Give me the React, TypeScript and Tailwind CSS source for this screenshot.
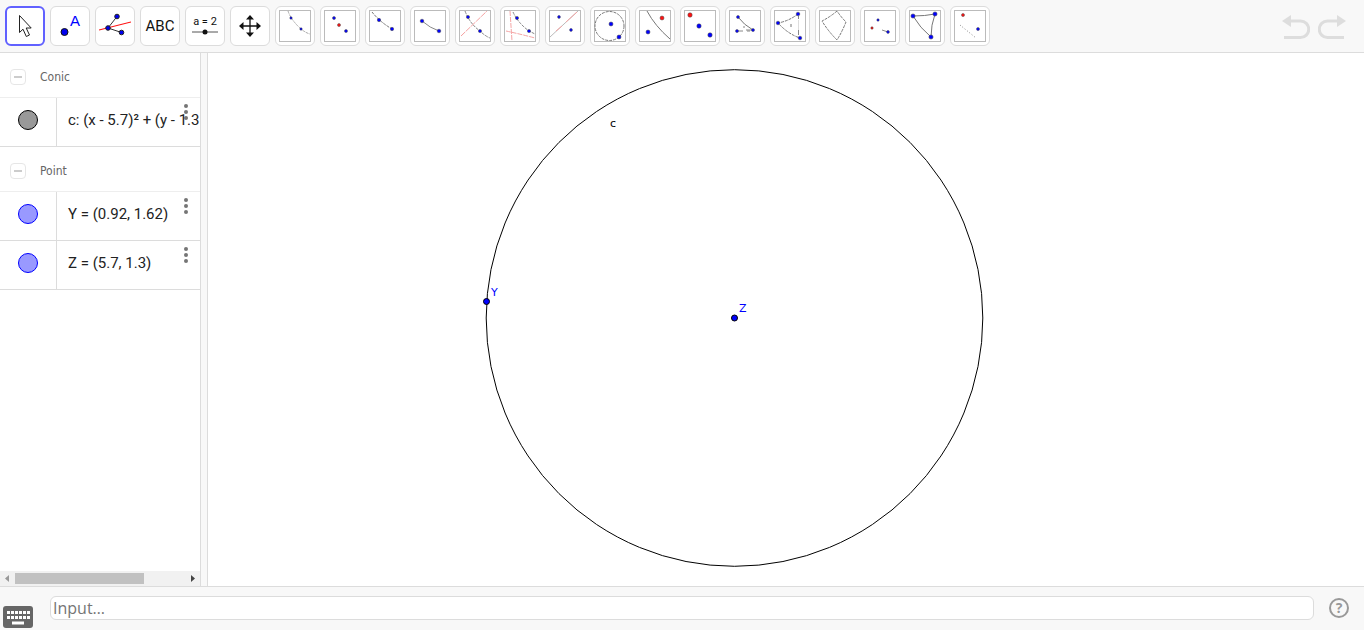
import { useState } from "react";
import type { ReactNode } from "react";

type DotProps = { x: number; y: number; r?: number; color?: string };

function Dot({ x, y, r = 2, color = "#0000ff" }: DotProps) {
  return <circle cx={x} cy={y} r={r} fill={color} stroke="#444" strokeWidth="0.5" />;
}

const RED = "#ff1111";

type Tool = { name: string; custom?: boolean; icon: ReactNode };

const tools: Tool[] = [
  {
    name: "Move",
    icon: (
      <path d="M10.5 5.5V22.5L14 19.2L17.3 26.5L20.5 25L17.2 18H22.2Z" fill="#fff" stroke="#222" strokeWidth="1" />
    )
  },
  {
    name: "Point",
    icon: (
      <>
        <circle cx="10.5" cy="22" r="3.5" fill="#0000ee" stroke="#111" />
        <text className="font-['Liberation_Sans',sans-serif]" x="16" y="16" fill="#0000ff" fontSize="15">
          A
        </text>
      </>
    )
  },
  {
    name: "Best Fit Line",
    icon: (
      <>
        <path d="M18 6.5L9 18L22.5 22.5" fill="none" stroke="#333" />
        <path d="M0 20L32 12" stroke="#ff1010" strokeWidth="1.2" />
        <circle cx="18" cy="6.5" r="2.3" fill="#0000ee" stroke="#222" />
        <circle cx="9" cy="18" r="2.3" fill="#0000ee" stroke="#222" />
        <circle cx="22.5" cy="22.5" r="2.3" fill="#0000ee" stroke="#222" />
      </>
    )
  },
  {
    name: "Text",
    icon: (
      <text x="16" y="21" textAnchor="middle" fontSize="15" fill="#111">
        ABC
      </text>
    )
  },
  {
    name: "Slider",
    icon: (
      <>
        <text x="16" y="15" textAnchor="middle" fontSize="11" fill="#111">
          a = 2
        </text>
        <path d="M3 22H29" stroke="#555" />
        <circle cx="16" cy="22" r="2.5" fill="#111" />
      </>
    )
  },
  {
    name: "Move Graphics View",
    icon: (
      <>
        <path d="M16 8V24M8 16H24" stroke="#111" strokeWidth="1.3" />
        <path d="M16 5L20 9.5H12ZM16 27L20 22.500H12ZM5 16L9.5 12V20ZM27 16L22.500 12V20Z" fill="#111" />
      </>
    )
  },
  {
    name: "Tool 1",
    custom: true,
    icon: (
      <>
        <path d="M9 1Q12 10 22 19Q27 23 31 24" fill="none" stroke="#aaa" strokeDasharray="3 1" />
        <Dot x={12} y={8} r={1.2} />
        <Dot x={22} y={19} r={1.2} />
      </>
    )
  },
  {
    name: "Tool 2",
    custom: true,
    icon: (
      <>
        <Dot x={10} y={8} r={1.5} />
        <Dot x={15} y={15} r={1.5} color={RED} />
        <Dot x={22} y={21} r={1.5} />
      </>
    )
  },
  {
    name: "Tool 3",
    custom: true,
    icon: (
      <>
        <path d="M3 2Q11 12 23 19" fill="none" stroke="#777" strokeDasharray="3 1" />
        <Dot x={10} y={10} r={1.7} />
        <Dot x={23} y={19} r={1.7} />
      </>
    )
  },
  {
    name: "Tool 4",
    custom: true,
    icon: (
      <>
        <path d="M8 11Q16 18 25 21" fill="none" stroke="#888" />
        <Dot x={8} y={11} r={1.8} />
        <Dot x={25} y={21} r={1.8} />
      </>
    )
  },
  {
    name: "Tool 5",
    custom: true,
    icon: (
      <>
        <path d="M2 26L28 1" stroke="#f5a0a0" strokeDasharray="6 1" />
        <path d="M6 1Q11 14 21 21Q26 26 31 28" fill="none" stroke="#888" strokeDasharray="3 1" />
        <Dot x={9} y={7} r={1.6} />
        <Dot x={21} y={21} r={1.6} />
      </>
    )
  },
  {
    name: "Tool 6",
    custom: true,
    icon: (
      <>
        <path d="M6 1L8 31M2 21Q16 24 31 28" fill="none" stroke="#f5a5a5" strokeDasharray="5 1" />
        <path d="M9 2Q14 13 25 21L31 24" fill="none" stroke="#888" strokeDasharray="3 1" />
        <Dot x={13} y={8} r={1.6} />
        <Dot x={25} y={21} r={1.6} />
      </>
    )
  },
  {
    name: "Tool 7",
    custom: true,
    icon: (
      <>
        <path d="M1 27L29 1" stroke="#bbb" />
        <path d="M7 21L13 16M17 12L28 2" stroke="#f5a5a5" />
        <Dot x={10} y={7} r={1.4} />
        <Dot x={22} y={20} r={1.4} />
      </>
    )
  },
  {
    name: "Tool 8",
    custom: true,
    icon: (
      <>
        <circle cx="15.5" cy="16" r="14.5" fill="none" stroke="#777" strokeDasharray="3 1" />
        <Dot x={17} y={14} r={2} />
        <Dot x={25} y={27} r={2} />
      </>
    )
  },
  {
    name: "Tool 9",
    custom: true,
    icon: (
      <>
        <path d="M8 1Q16 16 31 29" fill="none" stroke="#777" />
        <Dot x={9} y={22} r={2} />
        <Dot x={23} y={8} r={2} color={RED} />
      </>
    )
  },
  {
    name: "Tool 10",
    custom: true,
    icon: (
      <>
        <Dot x={6} y={5} r={2.2} color={RED} />
        <Dot x={15} y={16} r={2.2} />
        <Dot x={26} y={25} r={2.2} />
      </>
    )
  },
  {
    name: "Tool 11",
    custom: true,
    icon: (
      <>
        <path d="M9 7Q15 15 24 20" fill="none" stroke="#777" />
        <path d="M8 21H14M17 20L24 20M15 16V18M18 21H21" fill="none" stroke="#888" />
        <Dot x={9} y={7} r={1.5} />
        <Dot x={8} y={21} r={1.5} />
        <Dot x={24} y={20} r={1.5} />
      </>
    )
  },
  {
    name: "Tool 12",
    custom: true,
    icon: (
      <>
        <path d="M24 4Q15 11 4 13Q14 24 26 28" fill="none" stroke="#777" strokeDasharray="3 1" />
        <path d="M24.500 6V9M24.500 20V25" stroke="#888" />
        <path d="M24.500 10V20" stroke="#ddd" />
        <path d="M17 14V17" stroke="#777" />
        <Dot x={24} y={4} r={1.8} />
        <Dot x={4} y={13} r={1.8} />
        <Dot x={26} y={28} r={1.8} />
      </>
    )
  },
  {
    name: "Tool 13",
    custom: true,
    icon: (
      <path d="M18 1Q11 7 3 11Q9 21 18 30Q23 22 27 12Q22 7 18 1Z" fill="none" stroke="#777" strokeDasharray="3 1" />
    )
  },
  {
    name: "Tool 14",
    custom: true,
    icon: (
      <>
        <path d="M18 20L24 22" stroke="#888" />
        <Dot x={14} y={10} r={1.2} />
        <Dot x={8} y={18} r={1.2} color={RED} />
        <Dot x={24} y={22} r={1.4} />
      </>
    )
  },
  {
    name: "Tool 15",
    custom: true,
    icon: (
      <>
        <path d="M4 6Q16 6 26 4Q22 15 22 27Q11 18 4 6Z" fill="none" stroke="#777" />
        <Dot x={4} y={6} r={2.1} />
        <Dot x={26} y={4} r={2.1} />
        <Dot x={22} y={27} r={2.1} />
      </>
    )
  },
  {
    name: "Tool 16",
    custom: true,
    icon: (
      <>
        <path d="M6 15L22 28" stroke="#888" strokeDasharray="1 2" />
        <Dot x={9} y={5} r={1.5} color={RED} />
        <Dot x={24} y={19} r={1.5} />
      </>
    )
  }
];

const groups = [
  { title: "Conic", items: [{ text: "c: (x - 5.7)² + (y - 1.3", marble: "border-black bg-[#999]" }] },
  {
    title: "Point",
    items: [
      { text: "Y = (0.92, 1.62)", marble: "border-[#0000ff] bg-[#9999ff]" },
      { text: "Z = (5.7, 1.3)", marble: "border-[#0000ff] bg-[#9999ff]" }
    ]
  }
];

function Toolbar() {
  const [selected, setSelected] = useState("Move");

  return (
    <header className="flex shrink-0 items-center justify-between border-b border-[#dcdcdc] bg-[#f8f8f8] py-1.5 pr-[18px] pl-[5px]">
      <div className="flex gap-[5px]">
        {tools.map((tool) => (
          <button
            aria-label={tool.name}
            className={`flex size-10 shrink-0 items-center justify-center rounded-md bg-white ${
              tool.name === selected ? "border-2 border-[#6161ff]" : "border border-[#dcdcdc]"
            }`}
            key={tool.name}
            onClick={() => setSelected(tool.name)}
            type="button"
          >
            <svg className="size-8 shrink-0 font-['Roboto',sans-serif]" viewBox="0 0 32 32">
              {tool.custom ? (
                <rect x="0.5" y="0.5" width="31" height="31" fill="none" stroke="#bbb" />
              ) : null}
              {tool.icon}
            </svg>
          </button>
        ))}
      </div>
      <div className="flex gap-2 text-[#ddd]">
        <button aria-label="Undo" type="button">
          <UndoArrow />
        </button>
        <button aria-label="Redo" className="-scale-x-100" type="button">
          <UndoArrow />
        </button>
      </div>
    </header>
  );
}

function UndoArrow() {
  return (
    <svg className="size-7" viewBox="0 0 28 28">
      <path d="M7 9H18.500A8 8 0 0 1 18.500 25.500H2" fill="none" stroke="currentColor" strokeWidth="3" />
      <path d="M0 9L9 3V15Z" fill="currentColor" />
    </svg>
  );
}

function AlgebraView() {
  return (
    <aside className="flex w-[201px] shrink-0 flex-col border-r border-[#dcdcdc] bg-white">
      <div className="min-h-0 flex-1 overflow-hidden">
        {groups.map((group) => (
          <section key={group.title}>
            <div className="flex h-[45px] items-center gap-3.5 border-b border-[#eee] pt-1 pl-2.5">
              <button
                aria-label={`Collapse ${group.title}`}
                className="flex size-4 items-center justify-center rounded-sm border border-[#e6e6e6]"
                type="button"
              >
                <span className="h-0.5 w-2 bg-[#ccc]" />
              </button>
              <h2 className="font-['DejaVu_Sans_Condensed','DejaVu_Sans',sans-serif] text-xs text-[#666]">
                {group.title}
              </h2>
            </div>
            {group.items.map((item) => (
              <div className="relative flex h-[49px] border-b border-[#dcdcdc]" key={item.text}>
                <div className="flex w-[57px] shrink-0 items-center justify-center border-r border-[#dcdcdc] pb-1">
                  <button
                    aria-label="Show or hide"
                    className={`size-5 rounded-full border ${item.marble}`}
                    type="button"
                  />
                </div>
                <p className="flex min-w-0 flex-1 items-center pb-[3px] pl-[11px] font-['Roboto',sans-serif] text-[15px] whitespace-nowrap text-[#222]">
                  {item.text}
                </p>
                <button aria-label="More" className="absolute top-1.5 right-3 text-[#757575]" type="button">
                  <svg className="h-4 w-1" fill="currentColor" viewBox="0 0 4 16">
                    <circle cx="2" cy="2" r="2" />
                    <circle cx="2" cy="8" r="2" />
                    <circle cx="2" cy="14" r="2" />
                  </svg>
                </button>
              </div>
            ))}
          </section>
        ))}
      </div>
      {/* Horizontal scrollbar */}
      <div className="flex h-[15px] shrink-0 items-center bg-[#f1f1f1]">
        <svg className="size-[15px]" viewBox="0 0 15 15">
          <path d="M9 4V11L5 7.500Z" fill="#999" />
        </svg>
        <div className="flex h-full flex-1 items-center">
          <div className="h-[11px] w-[76%] bg-[#c1c1c1]" />
        </div>
        <svg className="size-[15px]" viewBox="0 0 15 15">
          <path d="M6 4V11L10 7.500Z" fill="#444" />
        </svg>
      </div>
    </aside>
  );
}

function GraphicsView() {
  return (
    <main className="min-w-0 flex-1 overflow-hidden bg-white">
      <svg className="block size-full font-['DejaVu_Sans',sans-serif] text-[11px]">
        <circle cx="526.5" cy="265" r="248.300" fill="none" stroke="#000" />
        <text x="402" y="74">
          c
        </text>
        <circle cx="278.500" cy="248.500" r="3" fill="#0000ff" stroke="#000" />
        <text x="283" y="243" fill="#0000ff">
          Y
        </text>
        <circle cx="526.5" cy="265" r="3" fill="#0000ff" stroke="#000" />
        <text x="531" y="259" fill="#0000ff">
          Z
        </text>
      </svg>
    </main>
  );
}

function InputBar() {
  return (
    <footer className="flex h-11 shrink-0 items-center border-t border-[#dcdcdc] bg-[#f8f8f8] pr-[15px] pb-0.5 pl-[3px]">
      <button aria-label="Keyboard" className="mr-[17px] shrink-0 self-end" type="button">
        <svg className="h-[22px] w-[30px]" viewBox="0 0 30 22">
          <rect width="30" height="22" rx="3" fill="#666" />
          <path d="M4 6.500H27M4 11.500H27" stroke="#fff" strokeWidth="3" strokeDasharray="3 1" />
          <path d="M9 17H21" stroke="#fff" strokeWidth="3" />
        </svg>
      </button>
      <input
        aria-label="Input"
        className="h-6 min-w-0 flex-1 rounded-md border border-[#dcdcdc] bg-white px-0.5 font-['Open_Sans',sans-serif] text-base text-[#222] outline-none placeholder:text-[#757575]"
        placeholder="Input…"
        type="text"
      />
      <button
        aria-label="Help"
        className="ml-[15px] flex size-5 shrink-0 items-center justify-center rounded-full border-2 border-[#999] font-['Open_Sans',sans-serif] text-sm leading-none font-bold text-[#999]"
        type="button"
      >
        ?
      </button>
    </footer>
  );
}

export default function App() {
  return (
    <div className="flex h-screen flex-col overflow-hidden bg-white pr-0.5 pb-px">
      <Toolbar />
      <div className="flex min-h-0 flex-1">
        <AlgebraView />
        <div className="w-[7px] shrink-0 cursor-col-resize border-r border-[#dcdcdc] bg-[#f8f8f8]" />
        <GraphicsView />
      </div>
      <InputBar />
    </div>
  );
}
